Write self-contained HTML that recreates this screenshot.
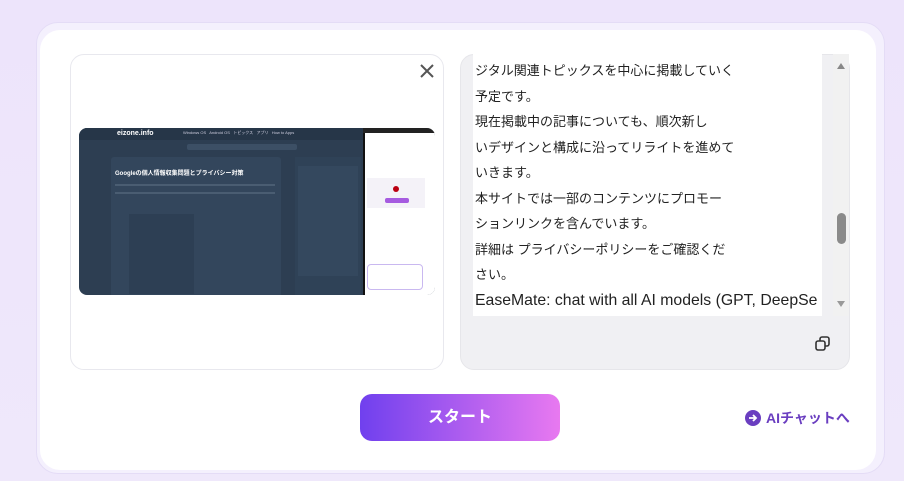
<!DOCTYPE html>
<html><head><meta charset="utf-8"><style>
*{margin:0;padding:0;box-sizing:border-box}
body{width:904px;height:481px;background:linear-gradient(180deg,#ede4fb,#efe8fb);font-family:"Liberation Sans","Noto Sans CJK JP",sans-serif;position:relative;overflow:hidden}
.outer{position:absolute;left:36px;top:22px;width:849px;height:452px;border-radius:22px;background:#f4f0fd;border:1px solid #e4dcf6}
.inner{position:absolute;left:40px;top:30px;width:836px;height:440px;border-radius:20px;background:#fff}
.lbox{position:absolute;left:70px;top:54px;width:374px;height:316px;border:1px solid #e8e8ee;border-radius:14px;background:#fff}
.rbox{position:absolute;left:460px;top:54px;width:390px;height:316px;border-radius:14px;background:#f0f0f3;border:1px solid #e6e6ea}
.txt{position:absolute;left:473px;top:54px;width:349px;height:262px;background:#fff;overflow:hidden;font-size:13px;color:#222;line-height:25.5px;padding-top:4px;padding-left:2px;white-space:nowrap}
.txt .en{font-size:15.8px}
.sb{position:absolute;left:833px;top:54px;width:16px;height:262px;background:#f1f1f1}
.thumb{position:absolute;left:79px;top:128px;width:356px;height:167px;border-radius:8px;background:#2d3e52;overflow:hidden}
.btn{position:absolute;left:360px;top:394px;width:200px;height:47px;border-radius:12px;background:linear-gradient(90deg,#7040ee,#e879f0);color:#fff;font-weight:bold;font-size:16px;text-align:center;line-height:47px}
.ai{position:absolute;left:745px;top:408px;font-size:14px;font-weight:bold;color:#6a3ec0;line-height:20px}
</style></head><body>
<div class="outer"></div><div class="inner"></div>
<div class="lbox"></div>
<svg style="position:absolute;left:419px;top:63px" width="16" height="16"><path d="M2 2L14 14M14 2L2 14" stroke="#555" stroke-width="2"/></svg>
<div class="thumb">
 <div style="position:absolute;left:0;top:0;width:284px;height:12px;background:#263648"></div>
 <div style="position:absolute;left:38px;top:2px;font-size:7px;color:#fff;font-weight:bold">eizone.info</div>
 <div style="position:absolute;left:104px;top:2px;font-size:4px;color:#ccd">Windows OS &nbsp; Android OS &nbsp; トピックス &nbsp; アプリ &nbsp; How to Apps</div>
 <div style="position:absolute;left:108px;top:16px;width:110px;height:6px;background:#3c4f65;border-radius:2px"></div>
 <div style="position:absolute;left:32px;top:29px;width:170px;height:140px;background:#33465c;border-radius:3px"></div>
 <div style="position:absolute;left:36px;top:40px;font-size:6px;color:#fff;font-weight:bold">Googleの個人情報収集問題とプライバシー対策</div>
 <div style="position:absolute;left:36px;top:56px;width:160px;height:10px;border-top:2px solid #4a5d72;border-bottom:2px solid #4a5d72"></div>
 <div style="position:absolute;left:50px;top:86px;width:65px;height:80px;background:#2d3f54"></div>
 <div style="position:absolute;left:216px;top:29px;width:66px;height:140px;background:#2f4257"></div>
 <div style="position:absolute;left:219px;top:38px;width:60px;height:110px;background:#34485e"></div>
 <div style="position:absolute;left:284px;top:0;width:72px;height:167px;background:#fff;border-left:2px solid #111"></div>
 <div style="position:absolute;left:284px;top:0;width:72px;height:5px;background:#222"></div>
 <div style="position:absolute;left:288px;top:50px;width:58px;height:30px;background:#f4f2f8"></div>
 <div style="position:absolute;left:306px;top:70px;width:24px;height:5px;background:#a65be0;border-radius:2px"></div>
 <div style="position:absolute;left:314px;top:58px;width:6px;height:6px;background:#b01;border-radius:50%"></div>
 <div style="position:absolute;left:288px;top:136px;width:56px;height:26px;border:1px solid #c9b8f0;border-radius:4px"></div>
</div>
<div class="rbox"></div>
<div class="txt">ジタル関連トピックスを中心に掲載していく<br>予定です。<br>現在掲載中の記事についても、順次新し<br>いデザインと構成に沿ってリライトを進めて<br>いきます。<br>本サイトでは一部のコンテンツにプロモー<br>ションリンクを含んでいます。<br>詳細は プライバシーポリシーをご確認くだ<br>さい。<br><span class="en">EaseMate: chat with all AI models (GPT, DeepSe</span></div>
<div class="sb"></div>
<svg style="position:absolute;left:836px;top:62px" width="10" height="8"><path d="M5 1L9 7H1Z" fill="#888"/></svg>
<div style="position:absolute;left:837px;top:213px;width:9px;height:31px;border-radius:5px;background:#8a8a8a"></div>
<svg style="position:absolute;left:836px;top:300px" width="10" height="8"><path d="M1 1H9L5 7Z" fill="#999"/></svg>
<svg style="position:absolute;left:814px;top:335px" width="18" height="18"><rect x="2" y="6" width="9" height="9" rx="2" fill="none" stroke="#333" stroke-width="1.6"/><path d="M6 6V4a2 2 0 0 1 2-2h5a2 2 0 0 1 2 2v5a2 2 0 0 1-2 2h-2" fill="none" stroke="#333" stroke-width="1.6"/></svg>
<div class="btn">スタート</div>
<div class="ai"><svg style="vertical-align:-3px;margin-right:5px" width="16" height="16"><circle cx="8" cy="8" r="8" fill="#6a3ec0"/><path d="M4 8H11M8 5L11 8L8 11" stroke="#fff" stroke-width="1.8" fill="none"/></svg>AIチャットへ</div>
</body></html>
